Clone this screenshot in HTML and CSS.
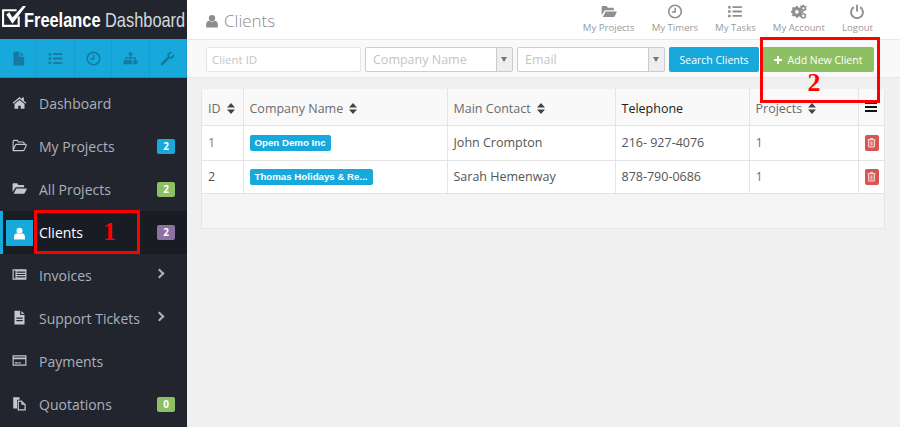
FILE: index.html
```html
<!DOCTYPE html>
<html>
  <head>
    <title>Clients</title>
    <link rel="stylesheet" href="styles.css">
  </head>
  <body>
    <svg class="icon-defs" aria-hidden="true">
      <symbol id="i-user" viewBox="0 0 24 24"><circle cx="12" cy="7" r="5.5"/><path d="M2 23v-5c0-4 2.500-6.500 5.500-6.500 1.200 1 2.800 1.600 4.500 1.600s3.300-.6 4.500-1.600c3 0 5.500 2.500 5.500 6.500v5z"/></symbol>
      <symbol id="i-home" viewBox="0 0 24 24"><path d="M12 3 1 12.500l1.300 1.500L12 6l9.700 8 1.300-1.500-4-3.400V4h-3v2.500z"/><path d="M12 8 4 14.500V22h6v-5h4v5h6v-7.500z"/></symbol>
      <symbol id="i-folder-line" viewBox="0 0 26 22"><path fill="none" stroke="currentColor" stroke-width="2" d="M2 18V4c0-1 .6-2 2-2h5l2 3h8c1 0 2 .8 2 2v2M2 19l4-9c.4-.7 1-1 2-1h15c1.500 0 2 1 1.500 2L21 19c-.3.600-1 1-2 1H3c-.8 0-1.300-.4-1-1z"/></symbol>
      <symbol id="i-folder" viewBox="0 0 26 22"><path d="M1 17V4c0-1.200.8-2 2-2h6l2 3h8c1.200 0 2 .8 2 2v2H8c-1.500 0-2.500.7-3 2z"/><path d="M3 20 7 12c.4-.8 1-1 2-1h15c1.300 0 1.800.8 1.300 1.800L22 19c-.4.700-1 1-2 1z"/></symbol>
      <symbol id="i-invoice" viewBox="0 0 26 22"><path fill-rule="evenodd" d="M1 2h24v18H1zM3 4v14h3V4zm5 2v2h15V6zm0 4v2h15v-2zm0 4v2h15v-2z"/></symbol>
      <symbol id="i-ticket" viewBox="0 0 22 24"><path fill-rule="evenodd" d="M3 1h9v7h7v15H3zM14 1.500 19 6.500h-5zM6 12v2h10v-2zm0 4v2h10v-2z"/></symbol>
      <symbol id="i-card" viewBox="0 0 26 22"><path fill-rule="evenodd" d="M1 2h24v18H1zM3 4v2h20V4zM3 9v9h20V9zM5 14h5v2H5zm6 0h4v2h-4z"/></symbol>
      <symbol id="i-copy" viewBox="0 0 24 24"><path d="M2 2h10v4H8v14H2z"/><path fill="none" stroke="currentColor" stroke-width="2" d="M10 8h5l6 6v8H10z"/><path d="M15 8v6h6z"/></symbol>
      <symbol id="i-doc" viewBox="0 0 20 24"><path d="M2 1h9v8h8v14H2zM13 1.500 18.500 7H13z"/></symbol>
      <symbol id="i-list" viewBox="0 0 24 24"><path d="M1 3h4v4H1zm0 7h4v4H1zm0 7h4v4H1zM8 3.500h15v3H8zm0 7h15v3H8zm0 7h15v3H8z"/></symbol>
      <symbol id="i-clock" viewBox="0 0 24 24"><circle cx="12" cy="12" r="10" fill="none" stroke="currentColor" stroke-width="2.500"/><path d="M11 6h2.500v8H7v-2.500h4z"/></symbol>
      <symbol id="i-sitemap" viewBox="0 0 26 24"><path d="M10 1h6v6h-2v3h8v5h3v7h-7v-7h2v-3h-7v3h3v7h-7v-7h2v-3H6v3h3v7H1v-7h3v-5h8V7h-2z"/></symbol>
      <symbol id="i-wrench" viewBox="0 0 24 24"><path d="M2 19 12 9c-.8-3 .4-6 3-7.200 1.500-.7 3-.8 4.500-.3L15 6v3h3l4.500-4.500c.5 1.500.4 3-.3 4.500-1.200 2.600-4.200 3.800-7.200 3L5 22.500c-1 .9-2.200.9-3 0s-.9-2.500 0-3.500z"/></symbol>
      <symbol id="i-gears" viewBox="0 0 26 24"><path fill-rule="evenodd" d="M8 6h3l.5 2 2 1 2-1 2 2-1 2 .7 2 2 .5v3l-2 .5-.7 2 1 2-2 2-2-1-2 .5-.5 1.500H8l-.5-2-2-.8-2 1-2-2 1-2-.8-2L0 17v-3l1.700-.5.8-2-1-2 2-2 2 1 2-.8zm1.500 6.500a3 3 0 1 0 0 6 3 3 0 0 0 0-6z" transform="translate(0 -3)"/><path fill-rule="evenodd" d="M19 1h2.500l.4 1.500 1.600.8 1.300-.6.700 2-1.100 1 .1 1.800 1 1-1 2-1.500-.5-1.500 1-.3 1.500h-2l-.5-1.500-1.500-1-1.400.5-1-2 1-1V5l-1-1 1-2 1.400.7 1.500-.7zm1.200 4a1.800 1.800 0 1 0 0 3.600 1.800 1.800 0 0 0 0-3.600z"/><circle cx="20" cy="19" r="3.400" fill="none" stroke="currentColor" stroke-width="2.500"/></symbol>
      <symbol id="i-power" viewBox="0 0 24 24"><path d="M10.500 1h3v11h-3z"/><path fill="none" stroke="currentColor" stroke-width="3" d="M7 5a9.500 9.500 0 1 0 10 0"/></symbol>
      <symbol id="i-trash" viewBox="0 0 20 24"><path fill-rule="evenodd" d="M1 5h5l1.200-3h5.600L14 5h5v2h-1.500v14c0 1-.7 2-1.700 2H4.200c-1 0-1.700-1-1.700-2V7H1zm7.500-1L8 5h4l-.500-1zM4.500 7v14h11V7zM6 9h1.500v10H6zm3.200 0h1.500v10H9.200zm3.300 0H14v10h-1.500z"/></symbol>
      <symbol id="i-plus" viewBox="0 0 12 12"><path d="M4.500 0h3v4.500H12v3H7.500V12h-3V7.500H0v-3h4.500z"/></symbol>
      <symbol id="i-sort" viewBox="0 0 8 11"><path d="M4 0l4 4.500H0zM4 11 0 6.500h8z"/></symbol>
      <symbol id="i-check" viewBox="0 0 24 24"><path fill="none" stroke="currentColor" stroke-width="2" d="M17 11v9H2V5h13"/><path d="M5 9l3-2 3 5L21 1h3L11 18z"/></symbol>
    </svg>

    <div class="app">
      <aside class="sidebar">
        <div class="brand">
          <svg class="brand-icon"><use href="#i-check"/></svg>
          <span class="brand-name"><b>Freelance</b> Dashboard</span>
        </div>
        <div class="shortcuts">
          <a><svg><use href="#i-doc"/></svg></a>
          <a><svg><use href="#i-list"/></svg></a>
          <a><svg><use href="#i-clock"/></svg></a>
          <a><svg><use href="#i-sitemap"/></svg></a>
          <a><svg><use href="#i-wrench"/></svg></a>
        </div>
        <nav class="nav">
          <a class="nav-item"><span class="nav-icon"><svg><use href="#i-home"/></svg></span>Dashboard</a>
          <a class="nav-item"><span class="nav-icon"><svg><use href="#i-folder-line"/></svg></span>My Projects<span class="count count-blue">2</span></a>
          <a class="nav-item"><span class="nav-icon"><svg><use href="#i-folder"/></svg></span>All Projects<span class="count count-green">2</span></a>
          <a class="nav-item active"><span class="nav-icon"><svg><use href="#i-user"/></svg></span>Clients<span class="count count-purple">2</span></a>
          <a class="nav-item"><span class="nav-icon"><svg><use href="#i-invoice"/></svg></span>Invoices<span class="chevron"></span></a>
          <a class="nav-item"><span class="nav-icon"><svg><use href="#i-ticket"/></svg></span>Support Tickets<span class="chevron"></span></a>
          <a class="nav-item"><span class="nav-icon"><svg><use href="#i-card"/></svg></span>Payments</a>
          <a class="nav-item"><span class="nav-icon"><svg><use href="#i-copy"/></svg></span>Quotations<span class="count count-green">0</span></a>
        </nav>
      </aside>

      <main class="content">
        <header class="topbar">
          <h1 class="page-title"><svg><use href="#i-user"/></svg>Clients</h1>
          <div class="top-links">
            <a class="top-link"><svg><use href="#i-folder"/></svg>My Projects</a>
            <a class="top-link"><svg><use href="#i-clock"/></svg>My Timers</a>
            <a class="top-link"><svg><use href="#i-list"/></svg>My Tasks</a>
            <a class="top-link"><svg><use href="#i-gears"/></svg>My Account</a>
            <a class="top-link"><svg><use href="#i-power"/></svg>Logout</a>
          </div>
        </header>

        <form class="toolbar">
          <input class="field field-id" type="text" placeholder="Client ID">
          <div class="select-box"><span>Company Name</span><i class="select-arrow"></i></div>
          <div class="select-box"><span>Email</span><i class="select-arrow"></i></div>
          <button class="btn btn-search" type="button">Search Clients</button>
          <button class="btn btn-add" type="button"><svg><use href="#i-plus"/></svg>Add New Client</button>
        </form>

        <section class="panel">
          <table class="clients-table">
            <thead>
              <tr>
                <th class="col-id">ID <svg class="sort"><use href="#i-sort"/></svg></th>
                <th class="col-company">Company Name <svg class="sort"><use href="#i-sort"/></svg></th>
                <th class="col-contact">Main Contact <svg class="sort"><use href="#i-sort"/></svg></th>
                <th class="col-phone">Telephone</th>
                <th class="col-projects">Projects <svg class="sort"><use href="#i-sort"/></svg></th>
                <th class="col-actions"><span class="menu-bars"></span></th>
              </tr>
            </thead>
            <tbody>
              <tr class="row-one">
                <td class="id-orange">1</td>
                <td><span class="label">Open Demo Inc</span></td>
                <td>John Crompton</td>
                <td>216- 927-4076</td>
                <td class="num-blue">1</td>
                <td class="col-actions"><a class="del"><svg><use href="#i-trash"/></svg></a></td>
              </tr>
              <tr class="row-two">
                <td>2</td>
                <td><span class="label">Thomas Holidays &amp; Re...</span></td>
                <td>Sarah Hemenway</td>
                <td>878-790-0686</td>
                <td class="num-blue">1</td>
                <td class="col-actions"><a class="del"><svg><use href="#i-trash"/></svg></a></td>
              </tr>
            </tbody>
          </table>
          <div class="panel-footer"></div>
        </section>
      </main>
    </div>

    <!-- annotation boxes drawn over the screenshot -->
    <div class="mark mark-one"><span>1</span></div>
    <div class="mark mark-two"><span>2</span></div>
  </body>
</html>
```

FILE: styles.css
```css
* {
  box-sizing: border-box;
}
html, body {
  margin: 0;
  height: 100%;
  overflow: hidden;
}
body {
  font-family: "Open Sans", Arial, sans-serif;
  font-size: 13px;
  color: #555;
  background: #f0f0f0;
}
.icon-defs {
  display: none;
}
svg {
  fill: currentColor;
}
.app {
  display: flex;
  height: 427px;
}

/* sidebar */
.sidebar {
  width: 187px;
  flex: none;
  background: #22252e;
}
.brand {
  height: 39px;
  display: flex;
  align-items: center;
  padding-left: 1px;
  color: #fff;
  overflow: hidden;
  white-space: nowrap;
}
.brand-icon {
  width: 25px;
  height: 25px;
  flex: none;
  margin-top: -4px;
}
.brand-name {
  flex: none;
  font-family: "Liberation Sans", sans-serif;
  font-size: 21px;
  color: #d5d8dd;
  margin-left: -2px;
  transform: scaleX(.78);
  transform-origin: left center;
}
.brand-name b {
  color: #fff;
}
.shortcuts {
  height: 39px;
  display: flex;
  background: #17a9dc;
  border-bottom: 1px solid #148fbb;
}
.shortcuts a {
  flex: 1;
  display: flex;
  align-items: center;
  justify-content: center;
  color: #16799f;
  border-right: 1px solid #1a9dcb;
}
.shortcuts svg {
  width: 15px;
  height: 15px;
}
.nav {
  padding-top: 4px;
}
.nav-item {
  height: 43px;
  display: flex;
  align-items: center;
  padding-left: 39px;
  padding-right: 12px;
  position: relative;
  font-size: 14px;
  color: #a9b1bd;
}
.nav-icon {
  position: absolute;
  left: 12px;
  top: 13px;
  width: 15px;
  height: 15px;
  color: #c3c8cf;
}
.nav-icon svg {
  width: 15px;
  height: 15px;
  display: block;
}
.nav-item.active {
  background: #191c22;
  color: #fff;
  border-left: 3px solid #17a9dc;
  padding-left: 36px;
}
.nav-item.active .nav-icon {
  left: 3px;
  top: 9px;
  width: 27px;
  height: 26px;
  background: #17a9dc;
  color: #fff;
  display: flex;
  align-items: center;
  justify-content: center;
}
.nav-item.active .nav-icon svg {
  width: 13px;
  height: 13px;
}
.count {
  margin-left: auto;
  width: 18px;
  height: 15px;
  border-radius: 2px;
  font-size: 10px;
  font-weight: 700;
  line-height: 15px;
  text-align: center;
  color: #fff;
}
.count-blue {
  background: #17a9dc;
}
.count-green {
  background: #8cc063;
}
.count-purple {
  background: #8a72a3;
}
.chevron {
  margin-left: auto;
  margin-right: 12px;
  margin-top: -5px;
  width: 7px;
  height: 7px;
  border-top: 2px solid #a9b1bd;
  border-right: 2px solid #a9b1bd;
  transform: rotate(45deg);
}

/* main column */
.content {
  flex: 1;
  min-width: 0;
}
.topbar {
  height: 40px;
  background: #fff;
  border-bottom: 1px solid #e8e8e8;
  display: flex;
  justify-content: space-between;
  padding-left: 18px;
}
.page-title {
  margin: 0;
  display: flex;
  align-items: center;
  height: 41px;
  font-size: 17px;
  font-weight: 300;
  color: #8c8c8c;
}
.page-title svg {
  width: 14px;
  height: 14px;
  margin-right: 5px;
}
.top-links {
  display: flex;
  margin-right: 27px;
}
.top-link {
  display: flex;
  flex-direction: column;
  align-items: center;
  padding-top: 4px;
  font-size: 9.600px;
  line-height: 13px;
  color: #9a9a9a;
  margin-left: 17px;
}
.top-link svg {
  width: 16px;
  height: 15px;
  margin-bottom: 2px;
  color: #8f8f8f;
}
.toolbar {
  height: 38px;
  background: #f9f9f9;
  border-bottom: 1px solid #e8e8e8;
  display: flex;
  align-items: center;
  gap: 4px;
  padding-left: 19px;
  padding-top: 2px;
}
.field {
  width: 155px;
  height: 25px;
  border: 1px solid #e6e6e6;
  border-radius: 2px;
  background: #fff;
  padding: 0 5px;
  font: 11.500px "Open Sans", sans-serif;
  outline: 0;
}
.field::placeholder {
  color: #c4c4c4;
}
.select-box {
  width: 148px;
  height: 25px;
  border: 1px solid #ccc;
  border-radius: 2px;
  background: #fff;
  display: flex;
  align-items: center;
  justify-content: space-between;
  padding-left: 7px;
  font-size: 12.500px;
  color: #c4c4c4;
}
.select-arrow {
  width: 16px;
  height: 23px;
  flex: none;
  background: #eee;
  border-left: 1px solid #ccc;
  position: relative;
}
.select-arrow::after {
  content: "";
  position: absolute;
  left: 4px;
  top: 9px;
  border: 3px solid transparent;
  border-top: 5px solid #777;
  border-bottom: 0;
}
.btn {
  height: 25px;
  border: 0;
  border-radius: 2px;
  color: #fff;
  font: 10.500px "Open Sans", sans-serif;
  padding: 0;
}
.btn-search {
  width: 90px;
  background: #17a9dc;
}
.btn-add {
  width: 112px;
  margin-left: -1px;
  background: #8cc063;
}
.btn-add svg {
  width: 8px;
  height: 8px;
  margin-right: 6px;
}

/* table panel */
.panel {
  margin: 11px 15px 0 14px;
  border: 1px solid #e6e6e6;
  border-top: 0;
  background: #f5f5f5;
}
.clients-table {
  width: 100%;
  table-layout: fixed;
  border-collapse: collapse;
  background: #fff;
}
.clients-table th, .clients-table td {
  border: 1px solid #e4e4e4;
  border-top: 0;
  padding: 0 6px;
  text-align: left;
  white-space: nowrap;
}
.clients-table th:first-child, .clients-table td:first-child {
  border-left: 0;
}
.clients-table th:last-child, .clients-table td:last-child {
  border-right: 0;
}
.clients-table th {
  height: 36px;
  padding-top: 3px;
  background: #f9f9f9;
  font-weight: 400;
  font-size: 12.500px;
  color: #6b6b6b;
}
.clients-table td {
  color: #555;
  font-size: 12.500px;
}
.row-one td {
  height: 35px;
}
.row-two td {
  height: 33px;
}
.col-id {
  width: 41px;
}
.col-company {
  width: 204px;
}
.col-contact {
  width: 168px;
}
.col-phone {
  width: 134px;
}
.clients-table th.col-phone {
  color: #222;
}
.col-projects {
  width: 109px;
}
.sort {
  width: 8px;
  height: 11px;
  margin-left: 3px;
  vertical-align: -1px;
  color: #444;
}
.id-orange {
  color: #9c7a3c !important;
}
.num-blue {
  color: #3d7fa5 !important;
}
.label {
  display: inline-block;
  height: 16px;
  padding: 0 5px;
  border-radius: 2px;
  background: #17a9dc;
  color: #fff;
  font-family: "Liberation Sans", Arial, sans-serif;
  font-size: 9.700px;
  font-weight: 700;
  line-height: 16px;
  vertical-align: middle;
}
.clients-table .col-actions {
  padding: 0 0 0 6px;
}
.menu-bars {
  display: block;
  width: 12px;
  height: 10px;
  border-top: 2px solid #111;
  border-bottom: 2px solid #111;
  position: relative;
}
.menu-bars::after {
  content: "";
  position: absolute;
  left: 0;
  right: 0;
  top: 2px;
  height: 2px;
  background: #111;
}
.del {
  display: flex;
  align-items: center;
  justify-content: center;
  width: 14px;
  height: 16px;
  border-radius: 2px;
  background: #d9534f;
  color: #fbe3e2;
}
.del svg {
  width: 9px;
  height: 11px;
}
.panel-footer {
  height: 34px;
}

/* red annotation boxes */
.mark {
  position: absolute;
  border: 3px solid #f00;
  display: flex;
  font-family: "Liberation Serif", serif;
  font-weight: 700;
  font-size: 26px;
  color: #f00;
}
.mark-one {
  left: 34px;
  top: 210px;
  width: 106px;
  height: 44px;
  justify-content: flex-end;
  align-items: center;
  padding-right: 21px;
}
.mark-two {
  left: 760px;
  top: 37px;
  width: 120px;
  height: 66px;
  justify-content: center;
  align-items: flex-end;
  padding-right: 12px;
  padding-bottom: 2px;
}
```
